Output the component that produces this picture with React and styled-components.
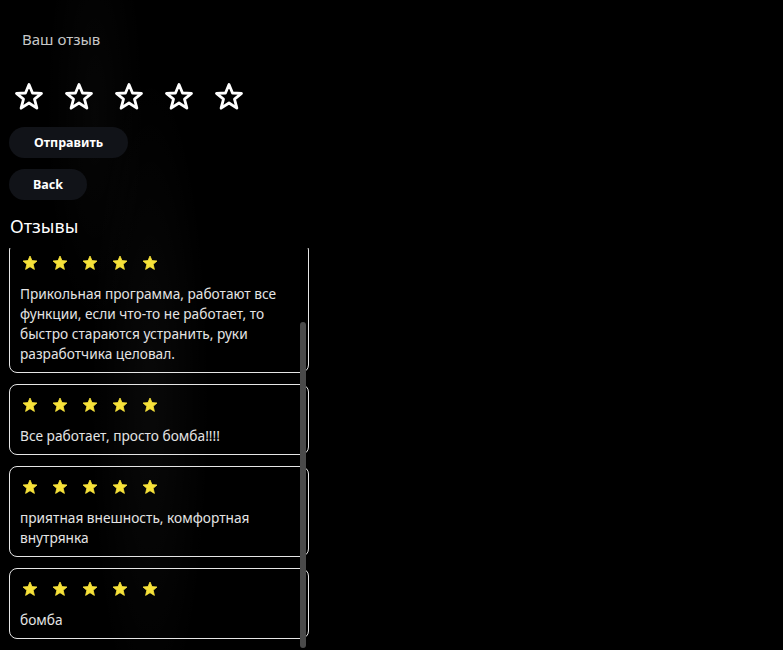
import React, { useEffect, useRef } from "react";
import styled, { createGlobalStyle } from "styled-components";

const GlobalStyle = createGlobalStyle`
  html, body {
    margin: 0;
    padding: 0;
    height: 100%;
    background: #000;
  }
  body {
    font-family: "Noto Sans", "Open Sans", sans-serif;
    color: #fff;
    overflow: hidden;
  }
`;

const Page = styled.div`
  position: relative;
  width: 783px;
  height: 650px;
  overflow: hidden;
  background:
    radial-gradient(ellipse 60px 330px at 150px 400px, rgba(255, 255, 255, 0.035), transparent 100%),
    radial-gradient(ellipse 50px 220px at 95px 110px, rgba(255, 255, 255, 0.025), transparent 100%),
    #000;
  padding: 0 0 0 9px;
  box-sizing: border-box;
  display: flex;
  flex-direction: column;
`;

const Label = styled.div`
  margin: 29px 0 0 13px;
  font-size: 15px;
  line-height: 20px;
  color: #c8c8c8;
`;

const StarRow = styled.div`
  display: flex;
  gap: 20px;
  margin: 33px 0 0 5px;
`;

const StarButton = styled.button`
  width: 30px;
  height: 30px;
  padding: 0;
  border: none;
  background: none;
  cursor: pointer;
  display: flex;
`;

const Pill = styled.button`
  align-self: flex-start;
  height: 31px;
  padding: 0 ${(p) => p.$px}px;
  margin-top: ${(p) => p.$mt}px;
  border: none;
  border-radius: 16px;
  background: #111318;
  color: #fff;
  font-family: "Noto Sans", "Open Sans", sans-serif;
  font-weight: 700;
  font-size: 12.5px;
  cursor: pointer;
`;

const Heading = styled.h2`
  margin: 14px 0 0 1px;
  font-size: 18px;
  line-height: 24px;
  font-weight: 400;
  color: #fff;
`;

const ListWrap = styled.div`
  position: relative;
  width: 300px;
  margin-top: 10px;
  height: 402px;
`;

const List = styled.div`
  height: 100%;
  overflow-y: scroll;
  scrollbar-width: none;
  display: flex;
  flex-direction: column;
  gap: 11px;
  &::-webkit-scrollbar {
    display: none;
  }
`;

const Thumb = styled.div`
  position: absolute;
  right: 3px;
  top: 74px;
  width: 6px;
  height: 326px;
  border-radius: 3px;
  background: #4a4a4a;
`;

const Card = styled.div`
  flex: none;
  border: 1px solid #e6e6e6;
  border-radius: 8px;
  padding: 12px 10px 8px;
`;

const SmallStars = styled.div`
  display: flex;
  gap: 14px;
  margin-left: 2px;
`;

const ReviewText = styled.p`
  margin: 13px 0 0;
  font-size: 13.7px;
  line-height: 20px;
  color: #e4e4e4;
`;

const OutlineStar = () => (
  <svg width="30" height="30" viewBox="0 0 30 30">
    <polygon
      points="15,2.5 18.5,11 27.5,11.4 20.5,17.2 22.9,26.2 15,21 7.1,26.2 9.5,17.2 2.5,11.4 11.5,11"
      fill="none"
      stroke="#fff"
      strokeWidth="2.8"
      strokeLinejoin="round"
    />
  </svg>
);

const FilledStar = () => (
  <svg width="16" height="16" viewBox="0 0 16 16">
    <polygon
      points="8,1 10,5.6 15,6 11.2,9.3 12.4,14.4 8,11.7 3.6,14.4 4.8,9.3 1,6 6,5.6"
      fill="#f7e23a"
      stroke="#f7e23a"
      strokeWidth="0.8"
      strokeLinejoin="round"
    />
  </svg>
);

const reviews = [
  "Прикольная программа, работают все функции, если что-то не работает, то быстро стараются устранить, руки разработчика целовал.",
  "Все работает, просто бомба!!!!",
  "приятная внешность, комфортная внутрянка",
  "бомба",
];

const App = () => {
  const listRef = useRef(null);

  useEffect(() => {
    if (listRef.current) listRef.current.scrollTop = 6;
  }, []);

  return (
    <Page>
      <GlobalStyle />
      <Label>Ваш отзыв</Label>
      <StarRow>
        {[0, 1, 2, 3, 4].map((i) => (
          <StarButton key={i} aria-label={`${i + 1}`}>
            <OutlineStar />
          </StarButton>
        ))}
      </StarRow>
      <Pill $px={25} $mt={15}>Отправить</Pill>
      <Pill $px={24} $mt={11}>Back</Pill>
      <Heading>Отзывы</Heading>
      <ListWrap>
        <List ref={listRef}>
          {reviews.map((text, i) => (
            <Card key={i}>
              <SmallStars>
                {[0, 1, 2, 3, 4].map((s) => (
                  <FilledStar key={s} />
                ))}
              </SmallStars>
              <ReviewText>{text}</ReviewText>
            </Card>
          ))}
          <div style={{ height: 20, flex: "none" }} />
        </List>
        <Thumb />
      </ListWrap>
    </Page>
  );
};

export default App;
